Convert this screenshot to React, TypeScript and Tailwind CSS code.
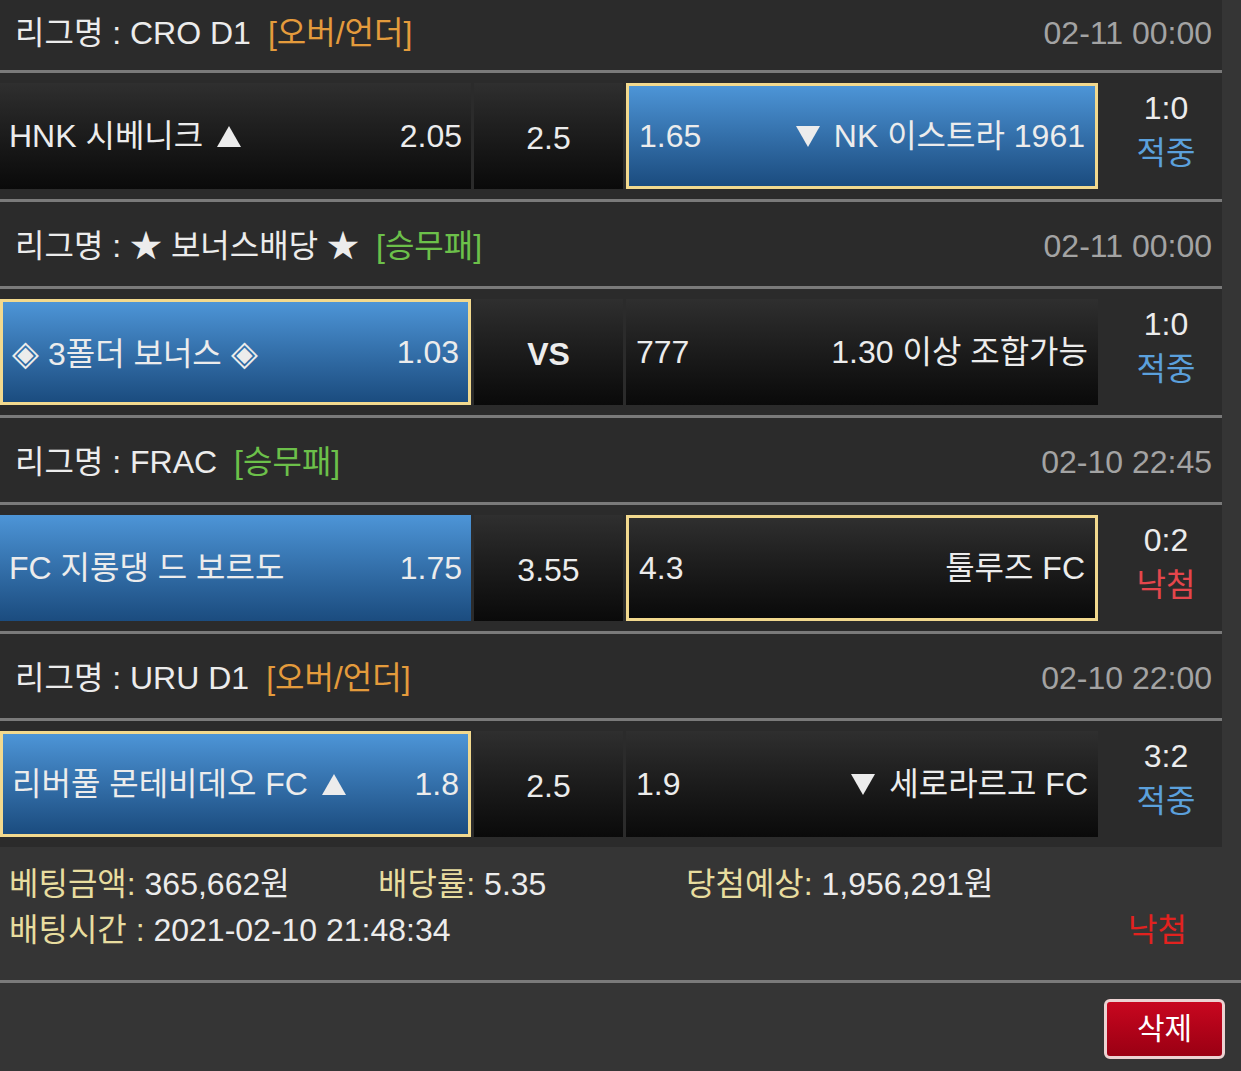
const matches = [
  {
    league: "CRO D1",
    type: "[오버/언더]",
    typeColor: "text-[#e49b3c]",
    time: "02-11 00:00",
    home: "HNK 시베니크 ▲",
    homeOdds: "2.05",
    draw: "2.5",
    away: "▼ NK 이스트라 1961",
    awayOdds: "1.65",
    pick: "away",
    blue: "away",
    score: "1:0",
    result: "적중",
  },
  {
    league: "★ 보너스배당 ★",
    type: "[승무패]",
    typeColor: "text-[#6cc04a]",
    time: "02-11 00:00",
    home: "◈ 3폴더 보너스 ◈",
    homeOdds: "1.03",
    draw: "VS",
    away: "1.30 이상 조합가능",
    awayOdds: "777",
    pick: "home",
    blue: "home",
    score: "1:0",
    result: "적중",
  },
  {
    league: "FRAC",
    type: "[승무패]",
    typeColor: "text-[#6cc04a]",
    time: "02-10 22:45",
    home: "FC 지롱댕 드 보르도",
    homeOdds: "1.75",
    draw: "3.55",
    away: "툴루즈 FC",
    awayOdds: "4.3",
    pick: "away",
    blue: "home",
    score: "0:2",
    result: "낙첨",
  },
  {
    league: "URU D1",
    type: "[오버/언더]",
    typeColor: "text-[#e49b3c]",
    time: "02-10 22:00",
    home: "리버풀 몬테비데오 FC ▲",
    homeOdds: "1.8",
    draw: "2.5",
    away: "▼ 세로라르고 FC",
    awayOdds: "1.9",
    pick: "home",
    blue: "home",
    score: "3:2",
    result: "적중",
  },
]

function Tri({ up }: { up: boolean }) {
  return (
    <svg
      width="24"
      height="21"
      viewBox="0 0 24 21"
      className={`inline-block align-baseline ${up ? "ml-[5px]" : "mr-[5px] ml-[-4px]"}`}
    >
      <path d={up ? "M12 0 L24 21 L0 21 Z" : "M0 0 L24 0 L12 21 Z"} fill="currentColor" />
    </svg>
  )
}

// the up/down arrows and diamonds are drawn at the size of the source font
function Name({ s }: { s: string }) {
  return (
    <>
      {s.split(/([▲▼◈])/).map((p, i) =>
        p === "▲" ? (
          <Tri key={i} up />
        ) : p === "▼" ? (
          <Tri key={i} up={false} />
        ) : p === "◈" ? (
          <span key={i} className="text-[35px]">{p}</span>
        ) : (
          p
        )
      )}
    </>
  )
}

function cellClass(blue: boolean, picked: boolean) {
  const bg = blue
    ? "bg-linear-to-b from-[#4d95d7] to-[#1b4c7f]"
    : "bg-linear-to-b from-[#2f2f2f] to-[#0a0a0a]"
  const border = picked ? "border-[3px] border-[#f2d98e]" : ""
  return `${bg} ${border}`
}

export default function App() {
  return (
    <div className="w-[1241px] min-h-[1071px] bg-[#353535] text-[32px] leading-none text-[#ececec] font-['Liberation_Sans','Noto_Sans_CJK_KR',sans-serif]">
      <div className="w-[1222px] bg-[#2b2b2b]">
        {matches.map((m, i) => (
          <div key={i}>
            <div
              className={`flex items-center justify-between border-b-[3px] border-[#7a7a7a] pl-[15px] pr-[10px] ${
                i === 0 ? "h-[73px] pb-[4px]" : "h-[87px] pt-[4px]"
              }`}
            >
              <div className="flex items-center">
                <span>리그명 : {m.league}</span>
                <span className={`ml-[17px] ${m.typeColor}`}>{m.type}</span>
              </div>
              <span className="text-[#a3a3a3]">{m.time}</span>
            </div>

            <div
              className={`flex gap-[3px] py-[10px] ${
                i === matches.length - 1 ? "h-[126px]" : "h-[129px] border-b-[3px] border-[#7a7a7a]"
              }`}
            >
              <div
                className={`flex w-[471px] shrink-0 items-center justify-between pl-[9px] pr-[9px] ${cellClass(
                  m.blue === "home",
                  m.pick === "home"
                )}`}
              >
                <span>
                  <Name s={m.home} />
                </span>
                <span>{m.homeOdds}</span>
              </div>
              <div
                className={`flex w-[149px] shrink-0 items-center justify-center pt-[4px] bg-linear-to-b from-[#2f2f2f] to-[#0a0a0a] ${
                  m.draw === "VS" ? "font-bold" : ""
                }`}
              >
                {m.draw}
              </div>
              <div
                className={`flex w-[472px] shrink-0 items-center justify-between pl-[10px] pr-[10px] ${cellClass(
                  m.blue === "away",
                  m.pick === "away"
                )}`}
              >
                <span>{m.awayOdds}</span>
                <span>
                  <Name s={m.away} />
                </span>
              </div>
              <div className="flex flex-1 flex-col items-center justify-center gap-[13px] pb-[12px] pl-[9px]">
                <span>{m.score}</span>
                <span className={m.result === "적중" ? "text-[#5ba0dc]" : "text-[#e5464c]"}>{m.result}</span>
              </div>
            </div>
          </div>
        ))}
      </div>

      <div className="bg-[#353535] pt-[14px] pb-[27px] pl-[9px] pr-[54px]">
        <div className="flex h-[46px] items-center">
          <span className="w-[369px]">
            <span className="text-[#e8dd9f]">베팅금액:</span> 365,662원
          </span>
          <span className="w-[308px]">
            <span className="text-[#e8dd9f]">배당률:</span> 5.35
          </span>
          <span>
            <span className="text-[#e8dd9f]">당첨예상:</span> 1,956,291원
          </span>
        </div>
        <div className="flex h-[46px] items-center justify-between">
          <span>
            <span className="text-[#e8dd9f]">배팅시간 :</span> 2021-02-10 21:48:34
          </span>
          <span className="text-[#e2221f]">낙첨</span>
        </div>
      </div>

      <div className="flex justify-end border-t-[3px] border-[#7a7a7a] pt-[16px] pr-[16px] pb-[13px]">
        <button className="flex h-[60px] w-[121px] items-center justify-center rounded-[6px] border-[3px] border-[#ecd2d2] bg-linear-to-b from-[#c8071f] to-[#9a0013] text-[30px] text-white">
          삭제
        </button>
      </div>
    </div>
  )
}
